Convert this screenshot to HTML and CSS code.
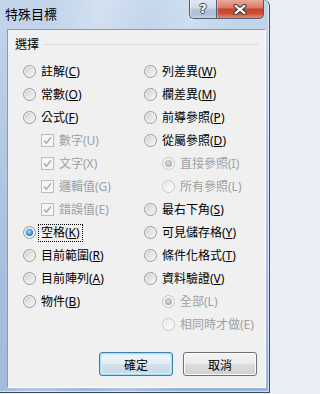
FILE: index.html
```html
<!DOCTYPE html>
<html lang="zh-Hant">
<head>
<meta charset="utf-8">
<title>特殊目標</title>
<link rel="stylesheet" href="styles.css">
</head>
<body>
<div class="window">
  <div class="titlebar">
    <div class="title">特殊目標</div>
    <div class="caption-buttons">
      <div class="cap help"><span class="q">?</span></div>
      <div class="cap close">
        <svg width="14" height="11" viewBox="0 0 14 11">
          <path d="M2.5 1.8 L11.5 9.2 M11.5 1.8 L2.5 9.2" stroke="#3a2f33" stroke-width="4.2" stroke-linecap="round" fill="none"/>
          <path d="M2.5 1.8 L11.5 9.2 M11.5 1.8 L2.5 9.2" stroke="#ffffff" stroke-width="2.2" stroke-linecap="round" fill="none"/>
        </svg>
      </div>
    </div>
  </div>
  <div class="client">
    <div class="group-head"><span class="group-title">選擇</span><div class="rule"></div></div>
    <div class="options">
      <div class="col">
        <div class="opt"><span class="radio"></span><span class="lbl">註解(<u>C</u>)</span></div>
        <div class="opt"><span class="radio"></span><span class="lbl">常數(<u>O</u>)</span></div>
        <div class="opt"><span class="radio"></span><span class="lbl">公式(<u>F</u>)</span></div>
        <div class="opt sub disabled"><span class="check"><svg width="11" height="11" viewBox="0 0 11 11"><path d="M2 5.6 L4.4 8.2 L9 2.4" stroke="#a8a8a8" stroke-width="1.5" fill="none"/></svg></span><span class="lbl">數字(U)</span></div>
        <div class="opt sub disabled"><span class="check"><svg width="11" height="11" viewBox="0 0 11 11"><path d="M2 5.6 L4.4 8.2 L9 2.4" stroke="#a8a8a8" stroke-width="1.5" fill="none"/></svg></span><span class="lbl">文字(X)</span></div>
        <div class="opt sub disabled"><span class="check"><svg width="11" height="11" viewBox="0 0 11 11"><path d="M2 5.6 L4.4 8.2 L9 2.4" stroke="#a8a8a8" stroke-width="1.5" fill="none"/></svg></span><span class="lbl">邏輯值(G)</span></div>
        <div class="opt sub disabled"><span class="check"><svg width="11" height="11" viewBox="0 0 11 11"><path d="M2 5.6 L4.4 8.2 L9 2.4" stroke="#a8a8a8" stroke-width="1.5" fill="none"/></svg></span><span class="lbl">錯誤值(E)</span></div>
        <div class="opt"><span class="radio checked"></span><span class="lbl focus">空格(<u>K</u>)</span></div>
        <div class="opt"><span class="radio"></span><span class="lbl">目前範圍(<u>R</u>)</span></div>
        <div class="opt"><span class="radio"></span><span class="lbl">目前陣列(<u>A</u>)</span></div>
        <div class="opt"><span class="radio"></span><span class="lbl">物件(<u>B</u>)</span></div>
      </div>
      <div class="col">
        <div class="opt"><span class="radio"></span><span class="lbl">列差異(<u>W</u>)</span></div>
        <div class="opt"><span class="radio"></span><span class="lbl">欄差異(<u>M</u>)</span></div>
        <div class="opt"><span class="radio"></span><span class="lbl">前導參照(<u>P</u>)</span></div>
        <div class="opt"><span class="radio"></span><span class="lbl">從屬參照(<u>D</u>)</span></div>
        <div class="opt sub disabled"><span class="radio checked"></span><span class="lbl">直接參照(I)</span></div>
        <div class="opt sub disabled"><span class="radio"></span><span class="lbl">所有參照(L)</span></div>
        <div class="opt"><span class="radio"></span><span class="lbl">最右下角(<u>S</u>)</span></div>
        <div class="opt"><span class="radio"></span><span class="lbl">可見儲存格(<u>Y</u>)</span></div>
        <div class="opt"><span class="radio"></span><span class="lbl">條件化格式(<u>T</u>)</span></div>
        <div class="opt"><span class="radio"></span><span class="lbl">資料驗證(<u>V</u>)</span></div>
        <div class="opt sub disabled"><span class="radio checked"></span><span class="lbl">全部(L)</span></div>
        <div class="opt sub disabled"><span class="radio"></span><span class="lbl">相同時才做(E)</span></div>
      </div>
    </div>
    <div class="buttons">
      <button class="btn default">確定</button>
      <button class="btn">取消</button>
    </div>
  </div>
</div>
</body>
</html>
```

FILE: styles.css
```css
html {
  margin: 0;
  padding: 0;
  background: #e9eef4;
}

body {
  margin: 0;
  padding: 0;
  width: 272px;
  height: 394px;
  overflow: hidden;
  background: #e9eef4;
  font-family: "Noto Sans", "Noto Sans CJK TC", sans-serif;
  font-size: 12px;
  color: #000;
}

.window {
  box-sizing: border-box;
  width: 270px;
  height: 393px;
  display: flex;
  flex-direction: column;
  border-right: 1px solid #3a4d63;
  border-bottom: 1px solid #3a4d63;
  border-top-right-radius: 6px;
  background:
    linear-gradient(100deg, rgba(255,255,255,0) 15%, rgba(255,255,255,0.28) 30%, rgba(255,255,255,0.05) 45%, rgba(255,255,255,0.22) 58%, rgba(255,255,255,0) 72%),
    linear-gradient(180deg, #c3d6ec 0%, #b8cce5 25%, #a9c0de 65%, #98b3d8 100%);
  box-shadow: inset -1px -1px 0 rgba(255,255,255,0.55);
}

.titlebar {
  height: 29px;
  flex: none;
  display: flex;
  align-items: flex-start;
  padding-right: 5px;
}

.title {
  padding: 6px 0 0 5px;
  font-family: "Noto Sans CJK TC", sans-serif;
  font-size: 13px;
  line-height: 15px;
  color: #000;
}

.caption-buttons {
  margin-left: auto;
  display: flex;
}

.cap {
  box-sizing: border-box;
  height: 19px;
  display: flex;
  align-items: center;
  justify-content: center;
  border: 1px solid #4e5f75;
  border-top: none;
}

.help {
  width: 27px;
  border-right: none;
  border-bottom-left-radius: 5px;
  background: linear-gradient(180deg, #dfe7f2 0%, #cfdbea 45%, #b3c3d8 50%, #aebfd6 80%, #c6d4e6 100%);
  box-shadow: inset 1px 0 0 rgba(255,255,255,0.6);
}

.q {
  font-family: "DejaVu Sans", sans-serif;
  font-weight: bold;
  font-size: 13px;
  line-height: 13px;
  color: #fff;
  text-shadow: 1px 0 0 #3f4856, -1px 0 0 #3f4856, 0 1px 0 #3f4856, 0 -1px 0 #3f4856;
  margin-top: -1px;
}

.close {
  width: 48px;
  border-bottom-right-radius: 5px;
  background: linear-gradient(180deg, #e9aa9b 0%, #dc8170 40%, #c7432c 52%, #cc4f36 75%, #e28a6f 100%);
  box-shadow: inset 1px 0 0 rgba(255,255,255,0.35);
}

.close svg {
  display: block;
}

.client {
  flex: 1;
  box-sizing: border-box;
  margin: 0 3px 4px 7px;
  display: flex;
  flex-direction: column;
  background: #f0f0f0;
  border: 1px solid;
  border-color: #8a9bb1 #ffffff #ffffff #8a9bb1;
  padding: 6px 7px 11px 7px;
}

.group-head {
  display: flex;
  align-items: center;
  gap: 4px;
  line-height: 15px;
}

.group-title {
  font-family: "Noto Sans CJK TC", sans-serif;
}

.rule {
  flex: 1;
  height: 1px;
  background: #d6dadf;
  margin-top: 1px;
}

.options {
  display: grid;
  grid-template-columns: 121px 1fr;
  padding-left: 8px;
  margin-top: 9px;
}

.col {
  display: flex;
  flex-direction: column;
}

.opt {
  height: 23px;
  display: flex;
  align-items: center;
  gap: 2px;
}

.opt.sub {
  padding-left: 18px;
}

.lbl {
  padding: 0 2px 1px;
  border: 1px solid transparent;
  line-height: 15px;
  white-space: nowrap;
}

.lbl u {
  text-underline-offset: 1px;
}

.lbl.focus {
  border: 1px dotted #000;
}

.disabled .lbl {
  color: #a0a0a0;
}

.radio {
  position: relative;
  flex: none;
  box-sizing: border-box;
  width: 13px;
  height: 13px;
  border-radius: 50%;
  border: 1px solid #9a9a9a;
  background: linear-gradient(135deg, #c9c9c9 0%, #e2e2e2 45%, #f8f8f8 100%);
  box-shadow: inset 0 0 0 1px #f3f3f3;
}

.radio.checked::after {
  content: "";
  position: absolute;
  left: 2px;
  top: 2px;
  width: 7px;
  height: 7px;
  border-radius: 50%;
  background: radial-gradient(circle at 45% 40%, #a8e8ff 0%, #3f9fe0 45%, #154f8c 100%);
}

.disabled .radio {
  border-color: #c6c6c6;
  background: linear-gradient(135deg, #e4e4e4 0%, #f2f2f2 50%, #fbfbfb 100%);
  box-shadow: inset 0 0 0 1px #f7f7f7;
}

.disabled .radio.checked::after {
  background: radial-gradient(circle at 45% 40%, #e0e0e0 0%, #b4b4b4 55%, #9a9a9a 100%);
}

.check {
  flex: none;
  box-sizing: border-box;
  width: 13px;
  height: 13px;
  border: 1px solid #bcbcbc;
  background: #f6f6f6;
  display: flex;
  align-items: center;
  justify-content: center;
}

.check svg {
  display: block;
}

.buttons {
  margin-top: auto;
  display: flex;
  justify-content: flex-end;
  gap: 10px;
  padding-right: 1px;
}

.btn {
  box-sizing: border-box;
  width: 74px;
  height: 24px;
  padding: 0;
  margin: 0;
  border: 1px solid #707070;
  border-radius: 3px;
  background: linear-gradient(180deg, #f3f3f3 0%, #ebebeb 48%, #dddddd 52%, #d0d0d0 100%);
  box-shadow: inset 0 0 0 1px #fbfbfb;
  font-family: "Noto Sans CJK TC", sans-serif;
  font-size: 12px;
  line-height: 15px;
  color: #000;
}

.btn.default {
  border-color: #3c7fb1;
  background: linear-gradient(180deg, #eef6fb 0%, #e3eef5 48%, #d3e1ea 52%, #c9d8e2 100%);
  box-shadow: inset 0 0 0 1px #9fdcf7, inset 0 0 0 2px #d6f0fb;
}
```
